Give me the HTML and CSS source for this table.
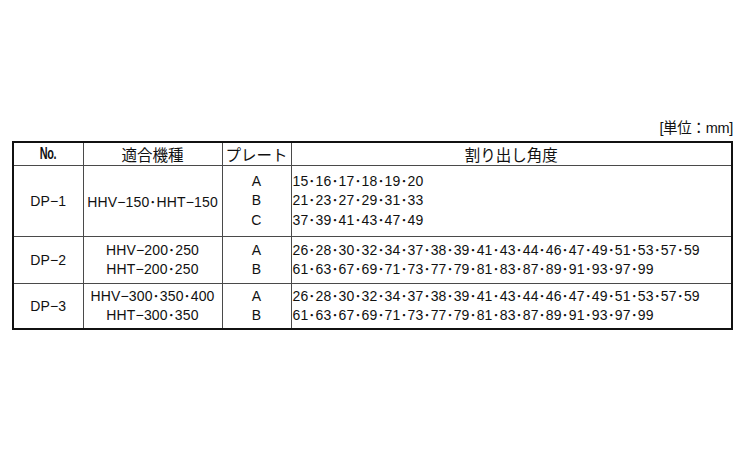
FILE: index.html
```html
<!DOCTYPE html>
<html lang="ja">
<head>
<meta charset="utf-8">
<link rel="stylesheet" href="styles.css">
</head>
<body>
<div class="wrap">
  <div class="unit">[単位：mm]</div>
  <table class="spec">
    <colgroup>
      <col class="c-no"><col class="c-model"><col class="c-plate"><col class="c-deg">
    </colgroup>
    <thead>
      <tr><th class="no"><span class="narrow">No.</span></th><th>適合機種</th><th>プレート</th><th>割り出し角度</th></tr>
    </thead>
    <tbody>
      <tr class="r1">
        <td>DP−1</td>
        <td>HHV−150･HHT−150</td>
        <td><div class="ln">A</div><div class="ln">B</div><div class="ln">C</div></td>
        <td class="deg"><div class="ln">15･16･17･18･19･20</div><div class="ln">21･23･27･29･31･33</div><div class="ln">37･39･41･43･47･49</div></td>
      </tr>
      <tr class="r2">
        <td>DP−2</td>
        <td><div class="ln">HHV−200･250</div><div class="ln">HHT−200･250</div></td>
        <td><div class="ln">A</div><div class="ln">B</div></td>
        <td class="deg"><div class="ln">26･28･30･32･34･37･38･39･41･43･44･46･47･49･51･53･57･59</div><div class="ln">61･63･67･69･71･73･77･79･81･83･87･89･91･93･97･99</div></td>
      </tr>
      <tr class="r3">
        <td>DP−3</td>
        <td><div class="ln">HHV−300･350･400</div><div class="ln">HHT−300･350</div></td>
        <td><div class="ln">A</div><div class="ln">B</div></td>
        <td class="deg"><div class="ln">26･28･30･32･34･37･38･39･41･43･44･46･47･49･51･53･57･59</div><div class="ln">61･63･67･69･71･73･77･79･81･83･87･89･91･93･97･99</div></td>
      </tr>
    </tbody>
  </table>
</div>
</body>
</html>
```

FILE: styles.css
```css
html, body {
  margin: 0;
  background: #fff;
}
body {
  font-family: "Liberation Sans", "Noto Sans CJK JP", sans-serif;
  color: #111;
}
.wrap {
  width: 721px;
  margin-left: 12px;
  padding-top: 117px;
}
.unit {
  text-align: right;
  font-family: "Liberation Sans", "Noto Sans CJK JP", sans-serif;
  font-size: 14.5px;
  line-height: 22px;
  height: 24px;
  letter-spacing: -0.3px;
}
.spec {
  width: 721px;
  border-collapse: collapse;
  border: 2px solid #111;
  table-layout: fixed;
}
.c-no { width: 70px; }
.c-model { width: 139px; }
.c-plate { width: 69px; }
.spec th, .spec td {
  border: 1px solid #4a4a4a;
  padding: 0;
  text-align: center;
  vertical-align: middle;
  font-size: 14px;
  font-weight: normal;
  white-space: nowrap;
  letter-spacing: 0.15px;
}
.spec th {
  height: 22px;
  font-family: "Noto Sans CJK JP", sans-serif;
  font-size: 15.5px;
  line-height: 20px;
  letter-spacing: 0;
}
.spec th.no {
  font-family: "Liberation Sans", sans-serif;
  font-weight: bold;
  font-size: 16px;
}
.narrow {
  display: inline-block;
  transform: scaleX(0.68);
  letter-spacing: -0.6px;
}
.ln {
  line-height: 19.5px;
}
.r1 td { height: 70px; }
.r2 td { height: 46px; }
.r3 td { height: 44px; }
.spec td.deg {
  text-align: left;
  padding-left: 1px;
}
```
